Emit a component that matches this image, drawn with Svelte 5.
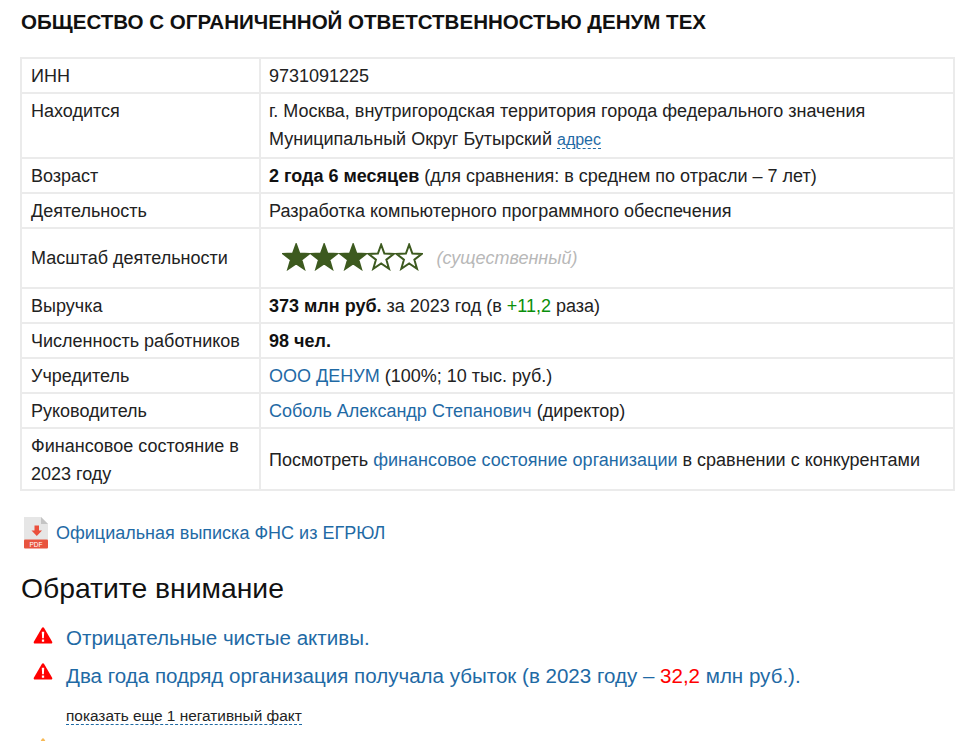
<script>
	const stars = [1, 1, 1, 0, 0];
	const triangle = 'M10 .3c.5 0 .9.3 1.200.7l8.500 14.600c.5.900-.1 1.900-1.100 1.900H1.400C.4 17.500-.2 16.500.3 15.600L8.800 1C9.100.6 9.500.3 10 .3z';
</script>

<div class="page">
	<h1>ОБЩЕСТВО С ОГРАНИЧЕННОЙ ОТВЕТСТВЕННОСТЬЮ ДЕНУМ ТЕХ</h1>

	<table>
		<tbody>
			<tr><td class="name">ИНН</td><td>9731091225</td></tr>
			<tr class="address">
				<td class="name top">Находится</td>
				<td>г. Москва, внутригородская территория города федерального значения<br />Муниципальный Округ Бутырский <a class="addr" href="#a">адрес</a></td>
			</tr>
			<tr><td class="name">Возраст</td><td><b>2 года 6 месяцев</b> (для сравнения: в среднем по отрасли – 7 лет)</td></tr>
			<tr><td class="name">Деятельность</td><td>Разработка компьютерного программного обеспечения</td></tr>
			<tr>
				<td class="name">Масштаб деятельности</td>
				<td>
					<div class="rating">
						<span class="stars">
							{#each stars as on}
								<svg viewBox="0 0 28.300 28" width="28.300" height="28" aria-hidden="true">
									<path d="M14.150 1.700l3.230 8.850 9.420.34-7.420 5.810 2.620 9.060-7.850-5.260-7.850 5.260 2.620-9.060-7.420-5.810 9.420-.34z" fill={on ? '#3d5a1f' : '#fff'} stroke="#3d5a1f" stroke-width="2" />
								</svg>
							{/each}
						</span>
						<i>(существенный)</i>
					</div>
				</td>
			</tr>
			<tr><td class="name">Выручка</td><td><b>373 млн руб.</b> за 2023 год (в <span class="up">+11,2</span> раза)</td></tr>
			<tr><td class="name">Численность работников</td><td><b>98 чел.</b></td></tr>
			<tr><td class="name">Учредитель</td><td><a href="#b">ООО ДЕНУМ</a> (100%; 10 тыс. руб.)</td></tr>
			<tr><td class="name">Руководитель</td><td><a href="#c">Соболь Александр Степанович</a> (директор)</td></tr>
			<tr class="finance">
				<td class="name">Финансовое состояние в 2023 году</td>
				<td>Посмотреть <a href="#d">финансовое состояние организации</a> в сравнении с конкурентами</td>
			</tr>
		</tbody>
	</table>

	<div class="extract">
		<svg viewBox="0 0 26 33" width="26" height="33" aria-hidden="true">
			<path d="M1 1h17l7 7v22H1z" fill="#e6e6e6" />
			<path d="M18 1l7 7h-7z" fill="#c4c4c4" />
			<path d="M11.500 9.500h4.500v5h3l-5.200 5.500-5.300-5.500h3z" fill="#ea4f3c" />
			<rect x="1" y="23.500" width="24" height="9" rx="1" fill="#e8543f" />
			<text x="13" y="30.700" class="pdf">PDF</text>
		</svg>
		<a href="#e">Официальная выписка ФНС из ЕГРЮЛ</a>
	</div>

	<h2>Обратите внимание</h2>

	<ul>
		<li>
			<svg viewBox="0 0 20 18" width="20" height="17" aria-hidden="true">
				<path d={triangle} fill="#f00" />
				<path d="M8.700 5h2.600l-.4 7H9.100zM8.800 13.200h2.400v2.500H8.800z" fill="#fff" />
			</svg>
			<a href="#f">Отрицательные чистые активы.</a>
		</li>
		<li>
			<svg viewBox="0 0 20 18" width="20" height="17" aria-hidden="true">
				<path d={triangle} fill="#f00" />
				<path d="M8.700 5h2.600l-.4 7H9.100zM8.800 13.200h2.400v2.500H8.800z" fill="#fff" />
			</svg>
			<a href="#g">Два года подряд организация получала убыток (в 2023 году – <span class="loss">32,2</span> млн руб.).</a>
		</li>
	</ul>

	<div class="more"><span>показать еще 1 негативный факт</span></div>
	<div class="peek">
		<svg viewBox="0 0 20 18" width="20" height="17" aria-hidden="true"><path d={triangle} fill="#f7b955" /></svg>
	</div>
</div>

<style>
	:global(body) {
		background: #fff;
		overflow: hidden;
	}

	.page {
		height: 741px;
		overflow: hidden;
		padding: 10px 19px 0 21px;
		box-sizing: border-box;
		font-family: 'Liberation Sans', Arial, sans-serif;
		font-size: 18px;
		color: #222;
	}

	h1 {
		margin: 0 0 24px;
		font-size: 20.55px;
		line-height: 23px;
		font-weight: 700;
		color: #111;
	}

	table {
		width: 935px;
		margin-left: -1px;
		border-collapse: collapse;
		table-layout: fixed;
		line-height: 28px;
	}

	td {
		border: 2px solid #ebebeb;
		padding: 2.5px 8px;
		vertical-align: middle;
	}

	td.name {
		width: 220px;
		padding-left: 9px;
	}

	td.top {
		vertical-align: top;
	}

	.address td {
		padding-bottom: 3.5px;
	}

	.finance td {
		padding-bottom: 1.5px;
	}

	a {
		color: #1f6aa5;
		text-decoration: none;
	}

	a.addr {
		font-size: 16px;
		border-bottom: 1px dashed #1f6aa5;
	}

	b {
		color: #111;
	}

	.up {
		color: #0a8f0a;
	}

	.loss {
		color: #f00;
	}

	.rating {
		display: flex;
		align-items: center;
		gap: 13px;
		padding-left: 13px;
		height: 53px;
	}

	.stars {
		display: flex;
		margin-top: -3px;
	}

	.rating i {
		color: #b8b8b8;
	}

	.extract {
		display: flex;
		align-items: center;
		gap: 7px;
		margin: 25px 0 0 2px;
	}

	.extract a {
		padding-top: 2px;
	}

	.pdf {
		font-family: 'Liberation Sans', Arial, sans-serif;
		font-size: 6.500px;
		fill: #fff;
		text-anchor: middle;
	}

	h2 {
		margin: 22px 0 0;
		font-size: 28.3px;
		line-height: 34px;
		font-weight: 400;
		color: #111;
	}

	ul {
		list-style: none;
		margin: 19px 0 0;
		padding: 0 0 0 12px;
		font-size: 20.55px;
	}

	li {
		display: flex;
		align-items: flex-start;
		gap: 13px;
		height: 38px;
		line-height: 28px;
	}

	li svg {
		margin-top: 1px;
		flex: none;
	}

	li:first-child svg {
		margin-top: 3px;
	}

	.more {
		margin: 7px 0 0 45px;
		font-size: 15.4px;
	}

	.more span {
		border-bottom: 1px dashed #1f6aa5;
	}

	.peek {
		margin: 13px 0 0 12px;
		line-height: 0;
	}
</style>
